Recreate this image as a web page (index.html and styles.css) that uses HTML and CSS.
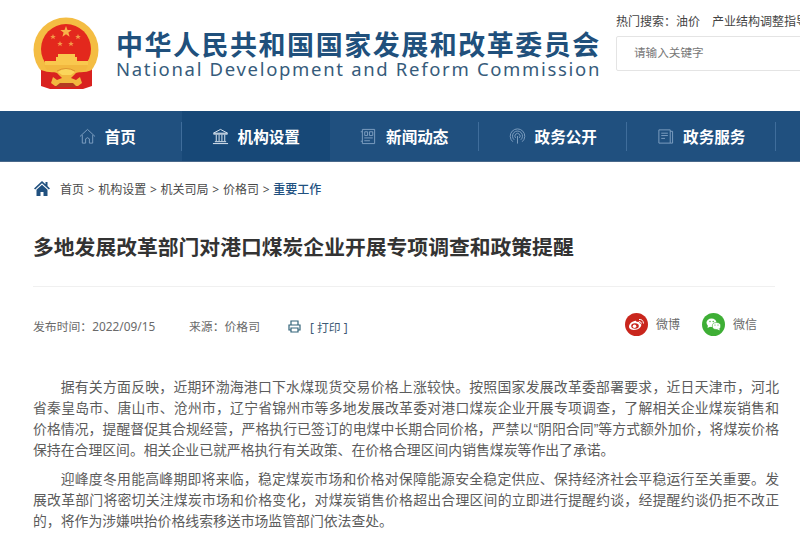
FILE: index.html
```
<!DOCTYPE html>
<html lang="zh-CN">
<head>
<meta charset="utf-8">
<title>国家发展和改革委员会</title>
<link rel="stylesheet" href="styles.css">
</head>
<body>
<header class="header">
  <svg class="emblem" viewBox="0 0 68 72">
    <path d="M9 47h50v18l-8 4H18l-9-4z" fill="#d9221f"/>
    <circle cx="33" cy="33" r="32.5" fill="#f4bd43"/>
    <circle cx="33" cy="32" r="25" fill="#e3281d"/>
    <path d="M33 9l1.5 4h4.2l-3.3 2.600 1.200 4.200-3.600-2.500-3.600 2.500 1.200-4.200-3.300-2.600h4.200z" fill="#f8b34a"/>
    <path d="M20 17l.8 2h2l-1.600 1.300.6 2-1.800-1.200-1.800 1.200.6-2-1.600-1.300h2zM45 17l.8 2h2l-1.600 1.300.6 2-1.800-1.200-1.800 1.200.6-2-1.600-1.300h2zM27 24l.8 2h2l-1.600 1.300.6 2-1.800-1.200-1.800 1.200.6-2-1.600-1.300h2zM38 24l.8 2h2l-1.600 1.300.6 2-1.800-1.200-1.800 1.200.6-2-1.600-1.300h2z" fill="#f39a48"/>
    <path d="M25 37h17v3h2v4h11v5H12v-5h11v-4h2z" fill="#f9c84e"/>
    <path d="M9 49h49q-3 7-9 10H18q-7-3-9-10z" fill="#f4bd43"/>
    <path d="M8 53q8 3 14 2l6-2h10l6 2q8 1 15-2v16l-9 3H17l-9-3z" fill="#d9221f"/>
    <path d="M11 48h44l-2 5-10 3-5 5 5 2 4-3 2 6-4 3H22l-4-3 2-6 4 3 5-2-5-5-10-3z" fill="#f2b83f"/>
    <path d="M25 55q8-7 17 0l-4 3h-9z" fill="#fbd65b"/>
    <path d="M24 54q9-5 18 0" fill="none" stroke="#dd9430"/>
    <path d="M27 66h13l4 4H22z" fill="#b43a20"/>
  </svg>
  <div class="brand">
    <div class="brand-cn">中华人民共和国国家发展和改革委员会</div>
    <div class="brand-en">National Development and Reform Commission</div>
  </div>
  <div class="search">
    <div class="hot"><span>热门搜索：油价</span><span>产业结构调整指导目录</span></div>
    <div class="box">请输入关键字</div>
  </div>
</header>
<nav class="nav">
  <a class="tab dim"><svg viewBox="0 0 18 18"><path d="M1 9l8-7.500L17 9M3.500 7.500V16H7v-4.500q2-2.500 4 0V16h3.500V7.500"/></svg>首页</a>
  <a class="tab active"><svg viewBox="0 0 18 18"><path d="M1.500 5.500L9 1.500l7.500 4zM1.500 6.500h15M3 14.500h12M1 16.500h16M4.500 7v7M7.500 7v7M10.500 7v7M13.500 7v7"/></svg>机构设置</a>
  <a class="tab dim"><svg viewBox="0 0 18 18"><path d="M2.500 1.500h13v15h-13zM5 4h3v4H5zM10 4h3.500v4H10zM4.500 10.500h9M4.500 13.500h6M.8 4h1.700M.8 14h1.700"/></svg>新闻动态</a>
  <a class="tab dim"><svg viewBox="0 0 18 18"><path d="M4 14.500a7.700 7.700 0 1 1 10 0M5.500 12.500a5.300 5.300 0 1 1 7 0M7 10.500a2.800 2.800 0 1 1 4 0M9 8.500v8"/></svg>政务公开</a>
  <a class="tab dim"><svg viewBox="0 0 18 18"><path d="M2 2h12v14H2zM14 3.500h2.500V16H14M4.500 5.500h7M4.500 8h7M4.500 11h4"/></svg>政务服务</a>
</nav>
<main class="main">
  <div class="crumbs">
    <svg viewBox="0 0 16 15"><path d="M8 0L0 7.500l1.200 1L8 2.200l6.800 6.300 1.200-1-2.500-2.400V1h-2v2.300zM8 3.700L2.500 8.800V15h4v-4h3v4h4V8.800z"/></svg>
    <span>首页 &gt; 机构设置 &gt; 机关司局 &gt; 价格司 &gt; <b>重要工作</b></span>
  </div>
  <h1 class="title">多地发展改革部门对港口煤炭企业开展专项调查和政策提醒</h1>
  <div class="meta">
    <span class="date">发布时间：2022/09/15</span>
    <span class="source">来源：价格司</span>
    <span class="print"><svg viewBox="0 0 13 13"><path d="M3 5V1h7v4M3 10H1V5h11v5h-2M3 8h7v4H3z"/></svg>[ 打印 ]</span>
    <span class="share weibo"><svg viewBox="0 0 23 23"><circle cx="11.500" cy="11.500" r="11.500" fill="#c9261d"/><path d="M9.500 8q2-1 2 1 3-1 3 1 3 1 1 4-2 3-7 3-5-.5-4.500-4Q5 9 9.500 8z" fill="#fff"/><ellipse cx="10" cy="13" rx="3.800" ry="2.800" fill="#c9261d"/><circle cx="9.500" cy="13.200" r="1.800" fill="#fff"/><path d="M14 6.500q4-.5 4.500 4M14 8.500q2 0 2.500 2" fill="none" stroke="#fff"/></svg>微博</span>
    <span class="share"><svg viewBox="0 0 23 23"><circle cx="11.500" cy="11.500" r="11.500" fill="#3eae35"/><ellipse cx="9.500" cy="9.800" rx="5" ry="4.200" fill="#fff"/><path d="M6 12l-.5 3 3-1.500z" fill="#fff"/><ellipse cx="14.500" cy="13" rx="4.200" ry="3.500" fill="#fff" stroke="#3eae35" stroke-width=".6"/><path d="M15 16l2.500 1.500v-2z" fill="#fff"/><g fill="#3eae35"><circle cx="8" cy="8.500" r=".7"/><circle cx="11.200" cy="8.500" r=".7"/><circle cx="13" cy="12" r=".6"/><circle cx="16" cy="12" r=".6"/></g></svg>微信</span>
  </div>
  <article class="article">
    <p>据有关方面反映，近期环渤海港口下水煤现货交易价格上涨较快。按照国家发展改革委部署要求，近日天津市，河北省秦皇岛市、唐山市、沧州市，辽宁省锦州市等多地发展改革委对港口煤炭企业开展专项调查，了解相关企业煤炭销售和价格情况，提醒督促其合规经营，严格执行已签订的电煤中长期合同价格，严禁以“阴阳合同”等方式额外加价，将煤炭价格保持在合理区间。相关企业已就严格执行有关政策、在价格合理区间内销售煤炭等作出了承诺。</p>
    <p>迎峰度冬用能高峰期即将来临，稳定煤炭市场和价格对保障能源安全稳定供应、保持经济社会平稳运行至关重要。发展改革部门将密切关注煤炭市场和价格变化，对煤炭销售价格超出合理区间的立即进行提醒约谈，经提醒约谈仍拒不改正的，将作为涉嫌哄抬价格线索移送市场监管部门依法查处。</p>
  </article>
</main>
</body>
</html>
```
FILE: styles.css
```
* { box-sizing: border-box; }
body {
  margin: 0;
  width: 800px;
  height: 539px;
  overflow: hidden;
  background: #fff;
  color: #5c5c5c;
  font-family: "Noto Sans", "Noto Sans CJK SC", sans-serif;
}
svg { flex: none; }
.header { display: flex; height: 111px; padding-left: 33px; overflow: hidden; }
.emblem { width: 68px; height: 72px; margin-top: 17px; }
.brand { width: 500px; margin: 30px 0 0 15px; white-space: nowrap; color: #20507c; }
.brand-cn { font-size: 27px; line-height: 30px; font-weight: 700; letter-spacing: 1.520px; }
.brand-en { font-size: 18.500px; line-height: 20px; margin-top: -1px; letter-spacing: 1.680px; color: #365b7b; }
.search { width: 184px; flex: none; padding-top: 13px; white-space: nowrap; }
.hot { display: flex; gap: 12px; height: 16px; line-height: 18px; font-size: 12px; color: #444; }
.box {
  width: 220px;
  height: 35px;
  margin-top: 7px;
  padding-left: 17px;
  border: 1px solid #e4e4e4;
  border-radius: 2px;
  line-height: 32px;
  font-size: 11.600px;
  color: #777;
}
.nav {
  display: flex;
  height: 51px;
  padding-left: 33px;
  background: #20507f;
  border-bottom: 1px solid #49688a;
}
.tab {
  position: relative;
  display: flex;
  flex: none;
  align-items: center;
  justify-content: center;
  gap: 9px;
  width: 148.500px;
  color: #fff;
  font-size: 15.600px;
  font-weight: 700;
}
.tab svg { width: 17px; height: 17px; fill: none; stroke: #e4edf5; stroke-width: 1; }
.tab.dim svg { stroke: #7fa0c2; }
.tab.active { background: #174877; }
.tab::after {
  content: "";
  position: absolute;
  right: 0;
  top: 11px;
  width: 1px;
  height: 29px;
  background: #3f6d9b;
}
.tab.active::after { display: none; }
.main { padding-left: 33px; }
.crumbs { display: flex; align-items: center; gap: 10px; height: 53px; padding-left: 1px; font-size: 12px; word-spacing: .6px; color: #4a4a4a; }
.crumbs svg { width: 16px; height: 15px; fill: #20507f; }
.crumbs b { color: #20507f; font-weight: 500; }
.title {
  width: 742px;
  height: 72px;
  margin: 0;
  padding-top: 17px;
  border-bottom: 1px solid #f0f0f0;
  font-size: 20.800px;
  line-height: 30px;
  font-weight: 700;
  color: #333;
  white-space: nowrap;
}
.meta { display: flex; align-items: center; height: 38px; margin-top: 18px; font-size: 11.850px; color: #6a6a6a; white-space: nowrap; }
.date { flex: none; width: 156px; padding-top: 3px; }
.source { flex: none; width: 99px; padding-top: 3px; }
.print { display: flex; flex: none; align-items: center; gap: 9px; width: 337px; padding-top: 4px; color: #3d5a75; }
.print svg { width: 13px; height: 13px; fill: none; stroke: #33647a; stroke-width: 1.200; }
.share { display: flex; flex: none; align-items: center; gap: 8px; font-size: 12px; }
.share svg { width: 23px; height: 23px; }
.weibo { width: 77px; }
.article { width: 746px; margin-top: 34px; font-family: "Liberation Sans", "Noto Sans CJK SC", sans-serif; font-size: 13.850px; line-height: 20.900px; }
.article p { margin: 0 0 8.500px; text-indent: 2em; text-align: justify; }
```
